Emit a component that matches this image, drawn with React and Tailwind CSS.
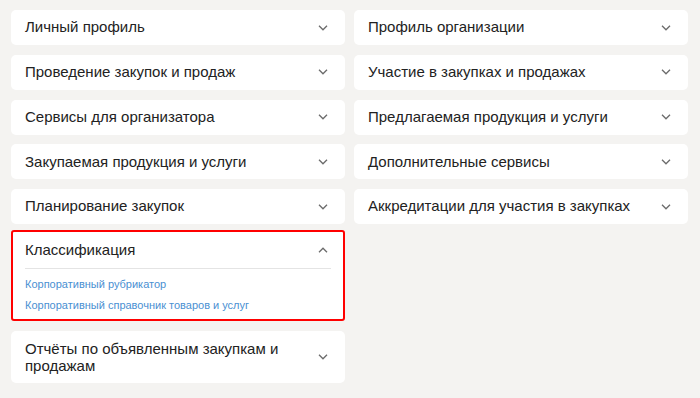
import React from "react";

const Chevron = ({ up = false }) => (
  <svg width="10" height="6" viewBox="0 0 10 6" className="shrink-0" fill="none">
    <path
      d={up ? "M1 5.2 5 1.2 9 5.2" : "M1 0.8 5 4.8 9 0.8"}
      stroke="#6b6b6b"
      strokeWidth="1.3"
    />
  </svg>
);

const Item = ({ title }) => (
  <div className="h-[35px] shrink-0 bg-white rounded-[5px] pl-[14px] pr-[17px] flex items-center justify-between">
    <span className="text-[15px] text-[#222]">{title}</span>
    <Chevron />
  </div>
);

const left = [
  "Личный профиль",
  "Проведение закупок и продаж",
  "Сервисы для организатора",
  "Закупаемая продукция и услуги",
  "Планирование закупок",
];

const right = [
  "Профиль организации",
  "Участие в закупках и продажах",
  "Предлагаемая продукция и услуги",
  "Дополнительные сервисы",
  "Аккредитации для участия в закупках",
];

export default function App() {
  return (
    <div
      className="w-[700px] h-[398px] bg-[#f4f3f1] pt-[10px] pl-[11px] flex gap-[9px] overflow-hidden"
      style={{ fontFamily: '"Liberation Sans", Arial, sans-serif' }}
    >
      <div className="w-[334px] flex flex-col">
        <div className="flex flex-col gap-[9.75px]">
          {left.map((t) => (
            <Item key={t} title={t} />
          ))}
        </div>
        <div className="mt-[6px] bg-white rounded-[3px] border-2 border-[#ff0000]">
          <div className="h-[36px] pl-[12px] pr-[15px] flex items-center justify-between">
            <span className="text-[15px] text-[#222]">Классификация</span>
            <Chevron up />
          </div>
          <div className="mx-[12px] border-t border-[#e4e4e4] pt-[8px] pb-[7px] flex flex-col gap-[7px]">
            <a className="text-[11px] leading-[14px] text-[#4a90d2]">Корпоративный рубрикатор</a>
            <a className="text-[11px] leading-[14px] text-[#4a90d2]">
              Корпоративный справочник товаров и услуг
            </a>
          </div>
        </div>
        <div className="mt-[10px] bg-white rounded-[5px] pl-[14px] pr-[17px] py-[9px] flex items-center justify-between">
          <span className="text-[15px] leading-[17px] text-[#222] pr-[16px]">
            Отчёты по объявленным закупкам и продажам
          </span>
          <Chevron />
        </div>
      </div>
      <div className="w-[334px] flex flex-col gap-[9.75px]">
        {right.map((t) => (
          <Item key={t} title={t} />
        ))}
      </div>
    </div>
  );
}
